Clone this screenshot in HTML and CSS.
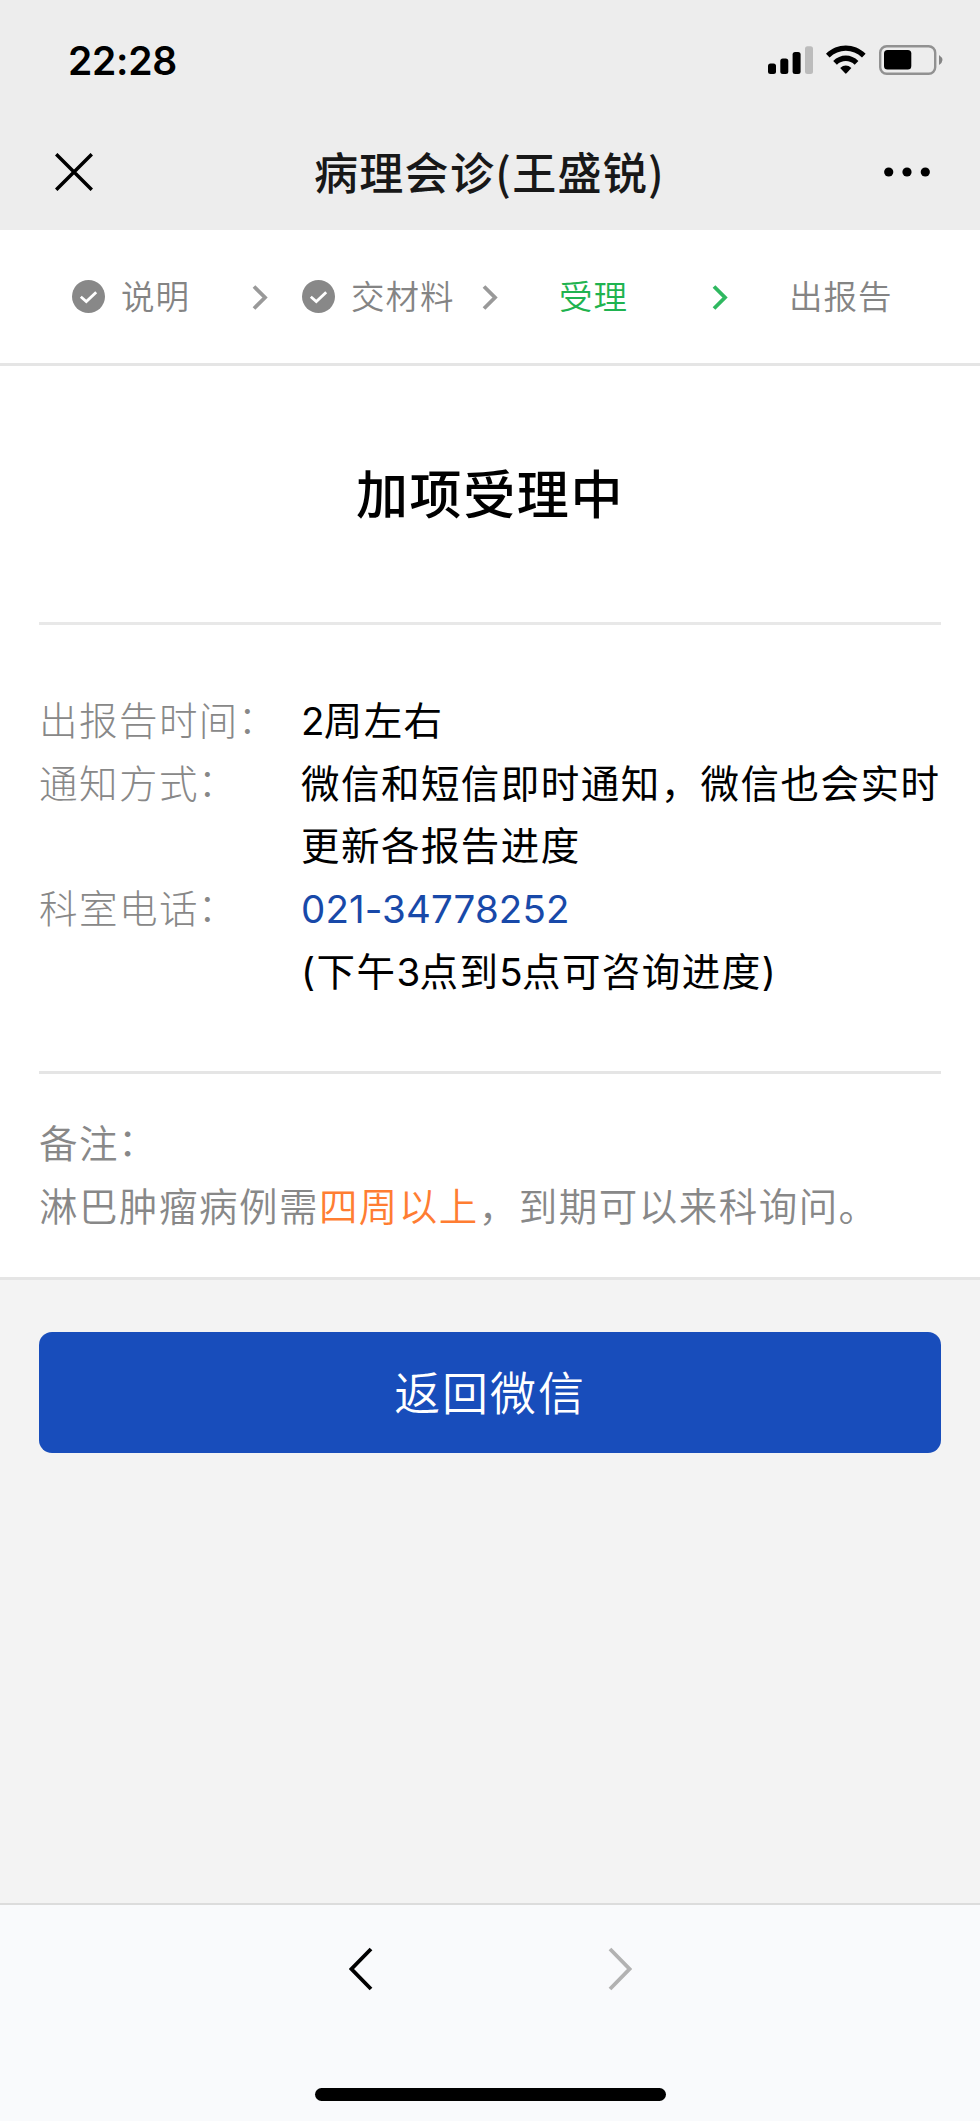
FILE: index.html
```html
<!DOCTYPE html>
<html lang="zh-CN">
<head>
<meta charset="utf-8">
<title>病理会诊</title>
<link rel="stylesheet" href="styles.css">
</head>
<body>
<div class="screen">
  <header class="top">
    <div class="status">
      <span class="time">22:28</span>
      <svg class="status-icons" width="176" height="32" viewBox="0 0 176 32">
        <rect x="0" y="18.500" width="8" height="10.500" rx="2.500"/>
        <rect x="12.300" y="13.500" width="8" height="15.500" rx="2.500"/>
        <rect x="24.600" y="7" width="8" height="22" rx="2.500"/>
        <rect x="37" y="1.300" width="8" height="27.700" rx="2.500" fill="#bcbcbc"/>
        <path d="M58 8.700C69-2.400 86.600-2.400 97.600 8.700L94 12.400C85 3.600 70.600 3.600 61.600 12.400Z"/>
        <path d="M65.200 16C72.400 8.600 83.200 8.600 90.400 16L86.700 19.700C81.800 14.800 73.800 14.800 68.900 19.700Z"/>
        <path d="M72.200 23Q77.800 18.200 83.400 23L78.500 28.300Q77.800 29 77.100 28.300Z"/>
        <rect x="112.200" y="1.200" width="55" height="27.600" rx="6.500" fill="none" stroke="#919191" stroke-width="2.400"/>
        <rect x="116" y="5" width="27.300" height="19.600" rx="3.500"/>
        <path d="M171 10Q178 15 171 20Z" fill="#858585"/>
      </svg>
    </div>
    <div class="navbar">
      <svg class="close" width="38" height="38" viewBox="0 0 38 38"><path d="M1.200 1.200L36.800 36.800M36.800 1.200L1.200 36.800" fill="none" stroke="#000" stroke-width="3.500"/></svg>
      <h1 class="nav-title">病理会诊(王盛锐)</h1>
      <svg class="more" width="46" height="10" viewBox="0 0 46 10"><circle cx="4.700" cy="5" r="4.600"/><circle cx="23" cy="5" r="4.600"/><circle cx="41.300" cy="5" r="4.600"/></svg>
    </div>
  </header>

  <nav class="steps">
    <div class="step">
      <svg class="tick" width="33" height="33" viewBox="0 0 33 33"><circle cx="16.500" cy="16.500" r="16.500" fill="#888"/><path d="M8.800 16.800L14.300 21.500L24.200 12.200" fill="none" stroke="#fff" stroke-width="2.800"/></svg>
      <span>说明</span>
    </div>
    <svg class="arrow" width="16" height="25" viewBox="0 0 16 25"><path d="M2 1.500L13 12.500L2 23.500"/></svg>
    <div class="step">
      <svg class="tick" width="33" height="33" viewBox="0 0 33 33"><circle cx="16.500" cy="16.500" r="16.500" fill="#888"/><path d="M8.800 16.800L14.300 21.500L24.200 12.200" fill="none" stroke="#fff" stroke-width="2.800"/></svg>
      <span>交材料</span>
    </div>
    <svg class="arrow" width="16" height="25" viewBox="0 0 16 25"><path d="M2 1.500L13 12.500L2 23.500"/></svg>
    <div class="step step-plain step-active"><span>受理</span></div>
    <svg class="arrow arrow-active" width="16" height="25" viewBox="0 0 16 25"><path d="M2 1.500L13 12.500L2 23.500"/></svg>
    <div class="step step-plain"><span>出报告</span></div>
  </nav>

  <main class="card">
    <h2 class="heading">加项受理中</h2>
    <dl class="info">
      <dt>出报告时间<span class="colon">：</span></dt>
      <dd><span class="num">2</span>周左右</dd>
      <dt>通知方式<span class="colon">：</span></dt>
      <dd>微信和短信即时通知，微信也会实时<br>更新各报告进度</dd>
      <dt>科室电话<span class="colon">：</span></dt>
      <dd><a class="tel">021-34778252</a><br>(下午<span class="num">3</span>点到<span class="num">5</span>点可咨询进度)</dd>
    </dl>
    <div class="note">
      <p>备注<span class="colon">：</span></p>
      <p>淋巴肿瘤病例需<em>四周以上</em>，到期可以来科询问。</p>
    </div>
  </main>

  <div class="actions"><button class="primary">返回微信</button></div>

  <footer class="toolbar">
    <div class="history">
      <svg width="24" height="44" viewBox="0 0 24 44"><path d="M22 2L2.500 22L22 42" fill="none" stroke="#000" stroke-width="3.800"/></svg>
      <svg width="24" height="44" viewBox="0 0 24 44"><path d="M2 2L21.500 22L2 42" fill="none" stroke="#b2b2b2" stroke-width="3.800"/></svg>
    </div>
    <div class="home"></div>
  </footer>
</div>
</body>
</html>
```
FILE: styles.css
```css
* { box-sizing: border-box; margin: 0; padding: 0; }
body {
  background: #fff;
  font-family: Inter, "Noto Sans CJK SC", sans-serif;
  color: #000;
}
.screen {
  width: 980px;
  height: 2121px;
  display: flex;
  flex-direction: column;
  background: #f3f3f3;
}
svg { display: block; flex: none; }

.top { height: 230px; background: #ededed; }
.status {
  height: 115px;
  padding: 7px 36px 0 68px;
  display: flex;
  align-items: center;
  justify-content: space-between;
}
.time { font-size: 39px; font-weight: 600; line-height: 48px; letter-spacing: -0.300px; }
.navbar {
  height: 114px;
  padding: 0 50px 0 55px;
  display: flex;
  align-items: center;
  justify-content: space-between;
}
.nav-title {
  padding: 0 0 3px 2px;
  font-family: "Noto Sans CJK SC", sans-serif;
  font-size: 44px;
  font-weight: 500;
  letter-spacing: 1.300px;
  line-height: 60px;
  color: #181818;
}

.steps {
  height: 136px;
  padding-left: 72px;
  border-bottom: 3px solid #e5e5e5;
  background: #fff;
  display: grid;
  grid-template-columns: 180px 50px 180px 50px 180px 50px 180px;
  align-items: center;
}
.step {
  display: flex;
  align-items: center;
  gap: 16px;
  font-size: 33.500px;
  font-weight: 350;
  letter-spacing: 1px;
  line-height: 48px;
  color: #848484;
  white-space: nowrap;
}
.step-plain { padding-left: 27px; }
.step-active { color: #1fb350; }
.arrow path { fill: none; stroke: #999; stroke-width: 3.800; }
.arrow { margin-top: 2px; }
.arrow-active path { stroke: #2fb860; }

.card {
  height: 914px;
  padding: 0 39px;
  background: #fff;
  border-bottom: 3px solid #e5e5e5;
}
.heading {
  height: 259px;
  padding-top: 95px;
  border-bottom: 3px solid #e8e8e8;
  text-align: center;
  font-size: 52px;
  font-weight: 500;
  letter-spacing: 1.600px;
  line-height: 70px;
}
.info {
  height: 449px;
  padding-top: 65px;
  border-bottom: 3px solid #e5e5e5;
  display: grid;
  grid-template-columns: 262px 1fr;
  align-content: start;
  font-size: 38.500px;
  letter-spacing: 1.460px;
  line-height: 62.700px;
  white-space: nowrap;
}
.info dt { color: #888; font-weight: 300; }
.num { letter-spacing: -0.800px; }
.tel { color: #1849a9; letter-spacing: 0.100px; }
/* full-width colon sits low in its cell; centre it on the ideographs */
.colon { position: relative; top: -2px; left: -1px; }
.note {
  padding-top: 39px;
  color: #888;
  font-size: 38.500px;
  font-weight: 350;
  letter-spacing: 1.480px;
  line-height: 62.700px;
  white-space: nowrap;
}
.note em { font-style: normal; color: #ff7d32; }

.actions { flex: 1; padding: 52px 39px 0; }
.primary {
  display: block;
  width: 100%;
  height: 121px;
  padding-bottom: 6px;
  border: 0;
  border-radius: 13px;
  background: #184dbb;
  color: #fff;
  font-family: inherit;
  font-size: 46px;
  font-weight: 350;
  letter-spacing: 1.900px;
}

.toolbar {
  height: 218px;
  border-top: 2px solid #dcdcdc;
  background: #f9fafc;
}
.history {
  height: 183px;
  padding-top: 42px;
  display: flex;
  justify-content: center;
  gap: 235px;
}
.home {
  width: 351px;
  height: 13px;
  margin: 0 auto;
  border-radius: 7px;
  background: #000;
}
```
